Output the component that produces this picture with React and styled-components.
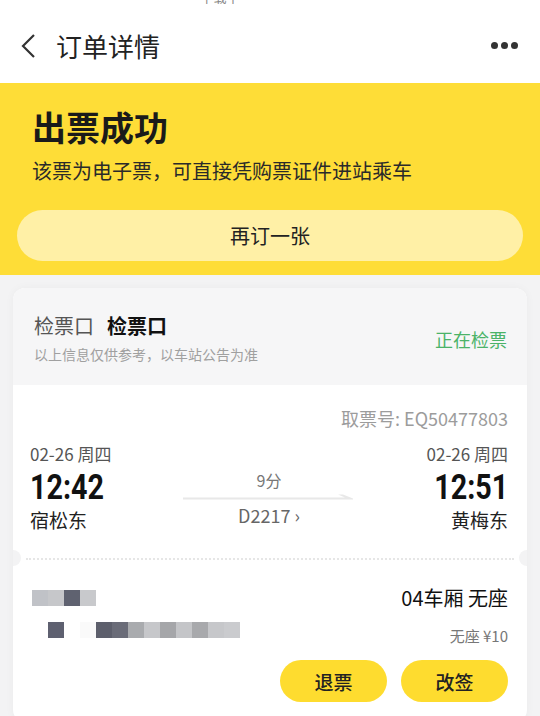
import React from "react";
import styled, { createGlobalStyle } from "styled-components";

const GlobalStyle = createGlobalStyle`
  html, body { margin: 0; padding: 0; background: #f3f3f4; }
  body { font-family: "Noto Sans CJK SC", "Noto Sans", sans-serif; color: #111; }
  * { box-sizing: border-box; }
`;

const Page = styled.div`
  width: 540px;
  height: 716px;
  overflow: hidden;
  background: #f3f3f4;
`;

const TopCrop = styled.div`
  height: 6px;
  overflow: hidden;
  background: #fff;
  display: flex;
  justify-content: center;
  padding-right: 100px;
  span {
    margin-top: -11px;
    font-size: 13px;
    line-height: 16px;
    color: #888;
  }
`;

const NavBar = styled.div`
  height: 77px;
  background: #fff;
  display: flex;
  align-items: center;
  padding: 2px 22px 0 20px;
`;

const Title = styled.div`
  flex: 1;
  margin-left: 20px;
  font-size: 26px;
  line-height: 34px;
  color: #222;
`;

const Dots = styled.div`
  display: flex;
  gap: 3px;
  span {
    width: 7px;
    height: 7px;
    border-radius: 50%;
    background: #333;
  }
`;

const Hero = styled.div`
  background: #fedd37;
  padding: 21px 17px 14px;
`;

const HeroTitle = styled.div`
  margin-left: 15px;
  font-size: 34px;
  font-weight: 700;
  line-height: 46px;
  color: #1a1a1a;
`;

const HeroSub = styled.div`
  margin: 8px 0 0 15px;
  font-size: 20px;
  line-height: 26px;
  color: #2a2a2a;
`;

const AgainButton = styled.div`
  margin-top: 26px;
  height: 51px;
  border-radius: 26px;
  background: #fff0a6;
  display: flex;
  align-items: center;
  justify-content: center;
  font-size: 20px;
  color: #222;
`;

const Card = styled.div`
  margin: 13px 13px 0;
  border-radius: 12px;
  background: #fff;
  box-shadow: 0 0 10px rgba(0, 0, 0, 0.04);
  overflow: hidden;
`;

const GateRow = styled.div`
  height: 97px;
  background: #f6f6f7;
  display: flex;
  align-items: center;
  justify-content: space-between;
  padding: 2px 20px 0 21px;
`;

const GateText = styled.div`
  display: flex;
  flex-direction: column;
  gap: 4px;
`;

const GateLine = styled.div`
  font-size: 20px;
  line-height: 28px;
  color: #555;
  b {
    margin-left: 13px;
    color: #111;
    font-weight: 700;
  }
`;

const Note = styled.div`
  font-size: 14px;
  line-height: 20px;
  color: #a0a0a0;
`;

const Status = styled.div`
  font-size: 18px;
  color: #4bb368;
  margin-top: 2px;
`;

const TrainBox = styled.div`
  padding: 20px 19px 0 17px;
  height: 173px;
`;

const PickupCode = styled.div`
  text-align: right;
  font-size: 18px;
  line-height: 26px;
  color: #9c9c9c;
`;

const Route = styled.div`
  margin-top: 11px;
  display: grid;
  grid-template-columns: 1fr 180px 1fr;
  align-items: end;
`;

const Stop = styled.div`
  display: flex;
  flex-direction: column;
  align-items: ${(p) => (p.$right ? "flex-end" : "flex-start")};
`;

const StopDate = styled.div`
  font-size: 17px;
  line-height: 24px;
  color: #555;
`;

const StopTime = styled.div`
  margin-top: 4px;
  font-family: Roboto, "Liberation Sans", sans-serif;
  font-size: 35px;
  font-weight: 700;
  line-height: 36px;
  color: #111;
  transform: scaleX(0.82);
  transform-origin: ${(p) => (p.$right ? "right" : "left")} center;
`;

const StopName = styled.div`
  margin-top: 1px;
  font-size: 19px;
  line-height: 26px;
  color: #222;
`;

const Middle = styled.div`
  display: flex;
  flex-direction: column;
  align-items: center;
  padding: 0 0 6px;
  font-size: 16px;
  color: #777;
`;

const Duration = styled.div`
  line-height: 22px;
`;

const Arrow = styled.svg`
  width: 172px;
  height: 8px;
  margin: 2px 0 2px;
`;

const TrainNo = styled.div`
  font-size: 18px;
  line-height: 24px;
  color: #666;
`;

const Divider = styled.div`
  position: relative;
  height: 2px;
  margin: 0 13px;
  border-top: 2px dotted #e6e6e6;
  &::before,
  &::after {
    content: "";
    position: absolute;
    top: -10px;
    width: 16px;
    height: 16px;
    border-radius: 50%;
    background: #f3f3f4;
  }
  &::before { left: -21px; }
  &::after { right: -21px; }
`;

const Passenger = styled.div`
  display: flex;
  justify-content: space-between;
  padding: 24px 19px 20px 19px;
`;

const Mosaic = styled.div`
  display: flex;
  flex-direction: column;
  gap: 16px;
  padding-top: 6px;
`;

const PixelRow = styled.div`
  display: flex;
  margin-left: ${(p) => p.$offset}px;
`;

const Pixel = styled.span`
  width: 16px;
  height: 16px;
  background: ${(p) => p.$c};
`;

const SeatInfo = styled.div`
  display: flex;
  flex-direction: column;
  align-items: flex-end;
`;

const Seat = styled.div`
  font-size: 20px;
  line-height: 28px;
  color: #111;
`;

const Price = styled.div`
  margin-top: 14px;
  font-size: 15px;
  line-height: 20px;
  color: #777;
`;

const Actions = styled.div`
  display: flex;
  gap: 14px;
  margin-top: 14px;
`;

const ActionButton = styled.div`
  width: 107px;
  height: 42px;
  border-radius: 21px;
  background: #fedc2f;
  display: flex;
  align-items: center;
  justify-content: center;
  font-size: 19px;
  font-weight: 500;
  color: #222;
`;

const row1 = ["#c0c2c7", "#c6c7ca", "#5f6270", "#c8c9cc"];
const row2 = [
  "#5e6070", "#fff", "#fafafa", "#5d5f6c", "#6a6c78", "#a9abae",
  "#c6c7ca", "#a5a6a9", "#c4c5c8", "#a8a9ac", "#c6c7ca", "#cacbce",
];

export default function App() {
  return (
    <Page>
      <GlobalStyle />
      <TopCrop><span>下载中</span></TopCrop>
      <NavBar>
        <svg width="16" height="26" viewBox="0 0 16 26">
          <path d="M14 2 L3 13 L14 24" fill="none" stroke="#333" strokeWidth="2.2" />
        </svg>
        <Title>订单详情</Title>
        <Dots><span /><span /><span /></Dots>
      </NavBar>

      <Hero>
        <HeroTitle>出票成功</HeroTitle>
        <HeroSub>该票为电子票，可直接凭购票证件进站乘车</HeroSub>
        <AgainButton>再订一张</AgainButton>
      </Hero>

      <Card>
        <GateRow>
          <GateText>
            <GateLine>检票口<b>检票口</b></GateLine>
            <Note>以上信息仅供参考，以车站公告为准</Note>
          </GateText>
          <Status>正在检票</Status>
        </GateRow>

        <TrainBox>
          <PickupCode>取票号: EQ50477803</PickupCode>
          <Route>
            <Stop>
              <StopDate>02-26 周四</StopDate>
              <StopTime>12:42</StopTime>
              <StopName>宿松东</StopName>
            </Stop>
            <Middle>
              <Duration>9分</Duration>
              <Arrow viewBox="0 0 172 8">
                <path d="M0 4.5 H162 L155 1.5 H160 L170 5.5 L170 6.5 H0 Z" fill="#e8e8e8" />
              </Arrow>
              <TrainNo>D2217 ›</TrainNo>
            </Middle>
            <Stop $right>
              <StopDate>02-26 周四</StopDate>
              <StopTime $right>12:51</StopTime>
              <StopName>黄梅东</StopName>
            </Stop>
          </Route>
        </TrainBox>

        <Divider />

        <Passenger>
          <Mosaic>
            <PixelRow $offset={0}>
              {row1.map((c, i) => <Pixel key={i} $c={c} />)}
            </PixelRow>
            <PixelRow $offset={16}>
              {row2.map((c, i) => <Pixel key={i} $c={c} />)}
            </PixelRow>
          </Mosaic>
          <SeatInfo>
            <Seat>04车厢 无座</Seat>
            <Price>无座 ¥10</Price>
            <Actions>
              <ActionButton>退票</ActionButton>
              <ActionButton>改签</ActionButton>
            </Actions>
          </SeatInfo>
        </Passenger>
      </Card>
    </Page>
  );
}
